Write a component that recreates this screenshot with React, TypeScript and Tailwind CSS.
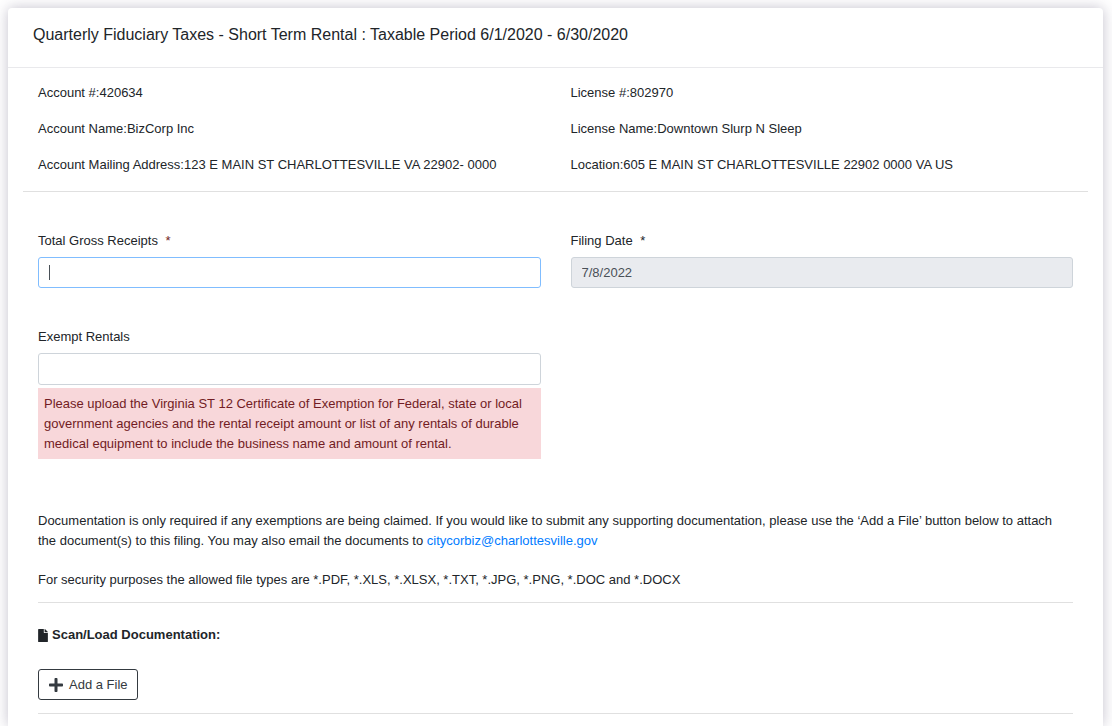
import { useState } from "react";
import { FaFile, FaPlus } from "react-icons/fa";

const ACCOUNT = [
  { label: "Account #:", value: "420634" },
  { label: "Account Name:", value: "BizCorp Inc" },
  { label: "Account Mailing Address:", value: "123 E MAIN ST CHARLOTTESVILLE VA 22902- 0000" },
];

const LICENSE = [
  { label: "License #:", value: "802970" },
  { label: "License Name:", value: "Downtown Slurp N Sleep" },
  { label: "Location:", value: "605 E MAIN ST CHARLOTTESVILLE 22902 0000 VA US" },
];

function Details({ rows }: { rows: { label: string; value: string }[] }) {
  return (
    <dl className="space-y-4">
      {rows.map((row) => (
        <div key={row.label} className="flex">
          <dt>{row.label}</dt>
          <dd>{row.value}</dd>
        </div>
      ))}
    </dl>
  );
}

export default function App() {
  const [receipts, setReceipts] = useState("");
  const [exempt, setExempt] = useState("");
  const [focused, setFocused] = useState(true);
  const showCaret = focused && receipts === "";

  return (
    <div className="min-h-screen bg-white pt-2 pr-[9px] pl-2 font-['Liberation_Sans',Arial,sans-serif] text-[13px] leading-5 text-[#212529]">
      <main className="min-h-[calc(100vh-8px)] rounded-t bg-white shadow-[0_0_14px_rgba(60,50,90,0.3)]">
        <header className="border-b border-[#e9e9ec] px-[25px] pt-[15px] pb-[21px]">
          <h1 className="text-base leading-[23px]">
            Quarterly Fiduciary Taxes - Short Term Rental : Taxable Period 6/1/2020 - 6/30/2020
          </h1>
        </header>

        <div className="px-[15px]">
          <section className="grid grid-cols-2 gap-[30px] border-b border-[#e0e0e0] px-[15px] pt-[15px] pb-4">
            <Details rows={ACCOUNT} />
            <Details rows={LICENSE} />
          </section>

          <form className="px-[15px]" onSubmit={(e) => e.preventDefault()}>
            <div className="grid grid-cols-2 gap-x-[30px] pt-[39px]">
              <div>
                <label htmlFor="receipts" className="mb-[6px] block">
                  Total Gross Receipts <span className="ml-1 text-[#721c24]">*</span>
                </label>
                <div className="relative">
                  <input
                    id="receipts"
                    autoFocus
                    value={receipts}
                    onChange={(e) => setReceipts(e.target.value)}
                    onFocus={() => setFocused(true)}
                    onBlur={() => setFocused(false)}
                    className={`block h-[31px] w-full rounded-[3px] border border-[#ced4da] px-[10px] outline-none focus:border-[#80bdff] ${showCaret ? "caret-transparent" : ""}`}
                  />
                  {showCaret && (
                    <span className="pointer-events-none absolute top-2 left-[11px] h-[15px] w-px bg-[#495057]" />
                  )}
                </div>
              </div>
              <div>
                <label htmlFor="filing-date" className="mb-[6px] block">
                  Filing Date <span className="ml-1">*</span>
                </label>
                <input
                  id="filing-date"
                  readOnly
                  value="7/8/2022"
                  className="block h-[31px] w-full rounded-[3px] border border-[#ced4da] bg-[#e9ebef] px-[10px] text-[#495057] outline-none"
                />
              </div>
              <div className="pt-[39px]">
                <label htmlFor="exempt" className="mb-[6px] block">
                  Exempt Rentals
                </label>
                <input
                  id="exempt"
                  value={exempt}
                  onChange={(e) => setExempt(e.target.value)}
                  className="block h-8 w-full rounded-[3px] border border-[#ced4da] px-[10px] outline-none"
                />
                <p className="mt-[3px] bg-[#f8d7da] px-[6px] pt-[6px] pb-[5px] text-[#721c24]">
                  Please upload the Virginia ST 12 Certificate of Exemption for Federal, state or local government
                  agencies and the rental receipt amount or list of any rentals of durable medical equipment to include
                  the business name and amount of rental.
                </p>
              </div>
            </div>

            <div className="border-b border-[#e0e0e0] pt-[52px] pb-3">
              <p className="mb-[19px]">
                Documentation is only required if any exemptions are being claimed. If you would like to submit any
                supporting documentation, please use the ‘Add a File’ button below to attach the document(s) to this
                filing. You may also email the documents to{" "}
                <a href="mailto:citycorbiz@charlottesville.gov" className="text-[#007bff]">
                  citycorbiz@charlottesville.gov
                </a>
              </p>
              <p>
                For security purposes the allowed file types are *.PDF, *.XLS, *.XLSX, *.TXT, *.JPG, *.PNG, *.DOC and
                *.DOCX
              </p>
            </div>

            <div className="border-b border-[#e0e0e0] pt-[22px] pb-[13px]">
              <h2 className="mb-6 flex items-center gap-1 font-bold">
                <FaFile className="h-[13px] w-[10px]" />
                Scan/Load Documentation:
              </h2>
              <button
                type="button"
                className="flex h-[31px] items-center gap-[5px] rounded-[3px] border border-[#343a40] px-[9px] text-[#343a40]"
              >
                <FaPlus className="size-4" />
                Add a File
              </button>
            </div>
          </form>
        </div>
      </main>
    </div>
  );
}
